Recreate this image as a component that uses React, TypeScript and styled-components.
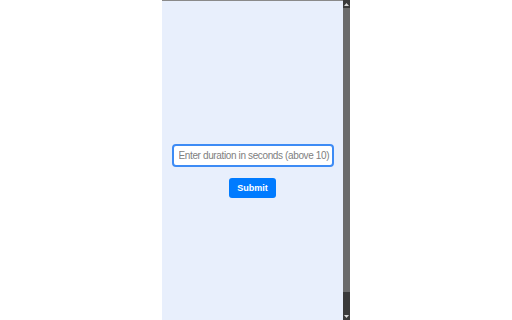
import styled, { createGlobalStyle } from 'styled-components'

const GlobalStyle = createGlobalStyle`
  html, body {
    margin: 0;
    padding: 0;
    background: #ffffff;
    font-family: 'Liberation Sans', Arial, sans-serif;
  }
`

// styled
const Page = styled.div`
  display: flex;
  justify-content: center;
  width: 512px;
  height: 320px;
  overflow: hidden;
`
const Frame = styled.div`
  display: flex;
  width: 188px;
  height: 320px;
`
const Content = styled.div`
  flex: 1;
  display: flex;
  flex-direction: column;
  align-items: center;
  padding-top: 143px;
  background-color: #e8effc;
  border-top: 1px solid #8a8a8a;
`
const DurationInput = styled.input`
  box-sizing: border-box;
  width: 162px;
  height: 23px;
  padding: 0 0 0 5px;
  border: 2px solid #3d8bf5;
  border-radius: 4px;
  background: #ffffff;
  font-family: 'Liberation Sans', Arial, sans-serif;
  font-size: 10px;
  letter-spacing: -0.37px;
  color: #333;
  outline: none;
  &::placeholder {
    color: #808080;
  }
`
const SubmitButton = styled.button`
  margin-top: 11px;
  width: 47px;
  height: 20px;
  padding: 0;
  border: none;
  border-radius: 3px;
  background-color: #007bff;
  color: #ffffff;
  font-family: 'Liberation Sans', Arial, sans-serif;
  font-size: 9px;
  font-weight: bold;
  cursor: pointer;
`
const Scrollbar = styled.div`
  display: flex;
  flex-direction: column;
  width: 7px;
  background-color: #3a3a3a;
`
const ArrowCell = styled.div`
  display: flex;
  align-items: center;
  justify-content: center;
  height: 8px;
  background-color: #3a3a3a;
`
const Thumb = styled.div`
  height: 284px;
  background-color: #6b6b6b;
`
const Track = styled.div`
  flex: 1;
`

function Arrow({ down }: { down?: boolean }) {
  return (
    <svg width="5" height="3" viewBox="0 0 5 3">
      <polygon
        points={down ? '0,0 5,0 2.5,3' : '2.5,0 5,3 0,3'}
        fill="#d8d8d8"
      />
    </svg>
  )
}

function App() {
  return (
    <>
      <GlobalStyle />
      <Page>
        <Frame>
          <Content>
            <DurationInput
              type="text"
              placeholder="Enter duration in seconds (above 10)"
            />
            <SubmitButton>Submit</SubmitButton>
          </Content>
          <Scrollbar>
            <ArrowCell>
              <Arrow />
            </ArrowCell>
            <Thumb />
            <Track />
            <ArrowCell>
              <Arrow down />
            </ArrowCell>
          </Scrollbar>
        </Frame>
      </Page>
    </>
  )
}

export default App
